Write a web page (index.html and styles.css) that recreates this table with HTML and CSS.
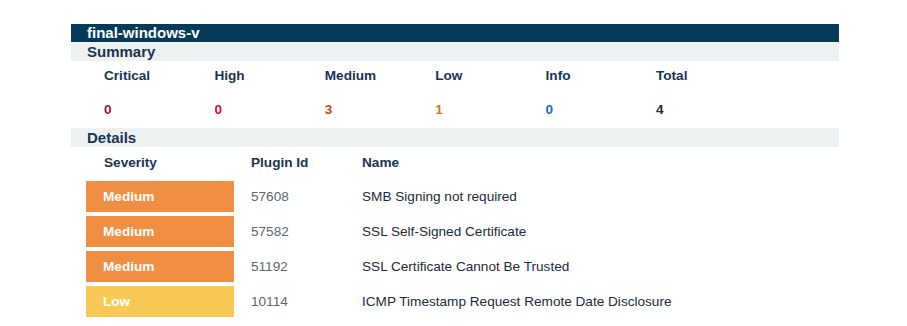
FILE: index.html
```html
<!DOCTYPE html>
<html>
<head>
<meta charset="utf-8">
<link rel="stylesheet" href="styles.css">
</head>
<body>
<div class="report">
  <div class="title">final-windows-v</div>
  <div class="section-head">Summary</div>
  <div class="summary">
    <div class="sum-row labels">
      <span>Critical</span><span>High</span><span>Medium</span><span>Low</span><span>Info</span><span>Total</span>
    </div>
    <div class="sum-row values">
      <span class="c-critical">0</span><span class="c-high">0</span><span class="c-medium">3</span><span class="c-low">1</span><span class="c-info">0</span><span class="c-total">4</span>
    </div>
  </div>
  <div class="section-head">Details</div>
  <div class="details">
    <div class="det-head">
      <span class="col-sev">Severity</span><span class="col-id">Plugin Id</span><span class="col-name">Name</span>
    </div>
    <div class="det-row">
      <span class="badge medium">Medium</span><span class="col-id id">57608</span><span class="col-name nm">SMB Signing not required</span>
    </div>
    <div class="det-row">
      <span class="badge medium">Medium</span><span class="col-id id">57582</span><span class="col-name nm">SSL Self-Signed Certificate</span>
    </div>
    <div class="det-row">
      <span class="badge medium">Medium</span><span class="col-id id">51192</span><span class="col-name nm">SSL Certificate Cannot Be Trusted</span>
    </div>
    <div class="det-row">
      <span class="badge low">Low</span><span class="col-id id">10114</span><span class="col-name nm">ICMP Timestamp Request Remote Date Disclosure</span>
    </div>
  </div>
</div>
</body>
</html>
```

FILE: styles.css
```css
html, body {
  margin: 0;
  padding: 0;
  background: #ffffff;
}
body {
  font-family: "Liberation Sans", Arial, sans-serif;
  padding-top: 24px;
}
.report {
  width: 768px;
  margin-left: 71px;
}
.title {
  height: 18px;
  line-height: 18px;
  background: #063a59;
  color: #ffffff;
  font-weight: bold;
  font-size: 15px;
  padding-left: 16px;
}
.section-head {
  height: 19px;
  line-height: 19px;
  background: #eef1f2;
  color: #163553;
  font-weight: bold;
  font-size: 15px;
  padding-left: 16px;
}
.summary {
  height: 67px;
  padding-left: 33px;
}
.sum-row {
  display: grid;
  grid-template-columns: repeat(6, 110.4px);
  font-weight: bold;
  font-size: 13.6px;
}
.sum-row.labels {
  padding-top: 1px;
  height: 28px;
  line-height: 28px;
  color: #163553;
}
.sum-row.values {
  padding-top: 2px;
  height: 36px;
  line-height: 36px;
}
.c-critical { color: #9e1538; }
.c-high { color: #c0182f; }
.c-medium { color: #b5521e; }
.c-low { color: #bf7d1c; }
.c-info { color: #1f6bb5; }
.c-total { color: #1b2d44; }

.details {
  font-size: 13.6px;
}
.det-head {
  display: flex;
  padding-top: 2px;
  height: 28px;
  line-height: 28px;
  font-weight: bold;
  color: #163553;
  margin-bottom: 2px;
}
.det-head .col-sev {
  width: 147px;
  padding-left: 33px;
}
.col-id {
  width: 111px;
}
.det-row {
  display: flex;
  align-items: center;
  height: 35px;
}
.badge {
  box-sizing: border-box;
  margin-left: 15px;
  width: 148px;
  height: 31px;
  line-height: 31px;
  padding-left: 17px;
  color: #ffffff;
  font-weight: bold;
  margin-right: 17px;
}
.badge.medium { background: #f08e44; }
.badge.low { background: #f8c955; }
.id {
  color: #5d6670;
}
.nm {
  color: #1c2a3a;
}
```
